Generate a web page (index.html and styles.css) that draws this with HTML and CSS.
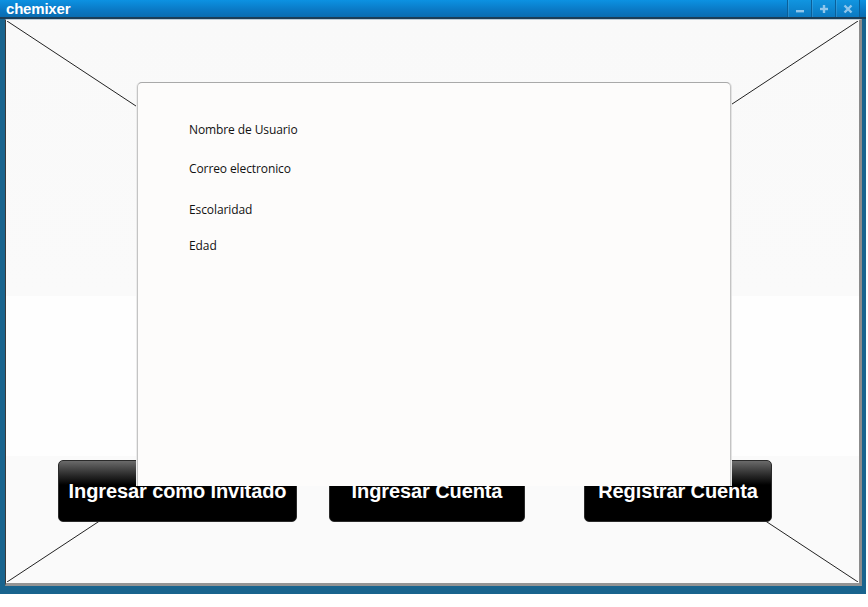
FILE: index.html
```html
<!DOCTYPE html>
<html lang="es">
<head>
<meta charset="utf-8">
<title>chemixer</title>
<link rel="stylesheet" href="styles.css">
</head>
<body>
<div class="window">
  <div class="titlebar">
    <span class="title">chemixer</span>
    <div class="controls">
      <span class="ctl"><svg width="10" height="10" viewBox="0 0 10 10"><rect x="1" y="6" width="8" height="2.4" fill="#8fc6ec"/></svg></span>
      <span class="ctl"><svg width="10" height="10" viewBox="0 0 10 10"><rect x="1" y="3.8" width="8" height="2.4" fill="#8fc6ec"/><rect x="3.8" y="1" width="2.4" height="8" fill="#8fc6ec"/></svg></span>
      <span class="ctl"><svg width="10" height="10" viewBox="0 0 10 10"><path d="M1.5 1.5 L8.5 8.5 M8.5 1.5 L1.5 8.5" stroke="#8fc6ec" stroke-width="2.4"/></svg></span>
    </div>
  </div>
  <div class="frame">
    <div class="canvas">
      <svg class="placeholder" width="100%" height="100%">
        <line x1="0" y1="0" x2="100%" y2="100%" stroke="#222" stroke-width="1"/>
        <line x1="100%" y1="0" x2="0" y2="100%" stroke="#222" stroke-width="1"/>
      </svg>
      <div class="actions">
        <button class="btn btn-guest">Ingresar como Invitado</button>
        <button class="btn btn-login">Ingresar Cuenta</button>
        <button class="btn btn-register">Registrar Cuenta</button>
      </div>
      <div class="panel">
        <div class="field f1">Nombre de Usuario</div>
        <div class="field f2">Correo electronico</div>
        <div class="field f3">Escolaridad</div>
        <div class="field f4">Edad</div>
      </div>
    </div>
  </div>
</div>
</body>
</html>
```

FILE: styles.css
```css
* { box-sizing: border-box; }
html, body { margin: 0; padding: 0; background: #ffffff; }
body { width: 868px; height: 607px; overflow: hidden; }

.window {
  width: 866px;
  height: 594px;
  background: #19648e;
  display: flex;
  flex-direction: column;
}

.titlebar {
  height: 19px;
  flex: none;
  border-bottom: 2px solid #1b3d57;
  background: linear-gradient(#0c92e2, #0a78c4 60%, #0a6cb0);
  display: flex;
  align-items: flex-start;
}
.title {
  font-family: "Liberation Sans", Arial, sans-serif;
  font-weight: bold;
  font-size: 15px;
  color: #ffffff;
  line-height: 17px;
  padding-left: 6px;
  letter-spacing: -0.2px;
}
.controls {
  margin-left: auto;
  margin-right: 6px;
  display: flex;
  height: 17px;
  border-left: 1px solid #0a5f99;
}
.ctl {
  width: 24px;
  height: 17px;
  display: flex;
  align-items: center;
  justify-content: center;
  border-right: 1px solid #0a5f99;
  box-shadow: inset 1px 0 0 rgba(255,255,255,0.12);
  background: linear-gradient(#1195e0, #0b79c2);
}

.frame {
  flex: 1;
  padding: 0 4px 8px 5px;
  display: flex;
}
.canvas {
  flex: 1;
  border-top: 1px solid #bccbd6;
  border-left: 1px solid #3a3a3a;
  border-right: 3px solid #8c8c8c;
  border-bottom: 3px solid #949494;
  background: linear-gradient(#f9f9f9 0, #fafafa 276px, #fefefe 276px, #fefefe 436px, #fafafa 436px);
  display: grid;
  grid-template: 1fr / 1fr;
  overflow: hidden;
}
.canvas > * { grid-area: 1 / 1; }

.placeholder {
  display: block;
  padding: 1px;
}

.actions {
  align-self: start;
  display: flex;
  margin-top: 440px;
  padding-left: 52px;
}
.btn {
  height: 62px;
  border: 1px solid #2a2a2a;
  border-radius: 5px;
  background: linear-gradient(#6a6a6a 0, #2a2a2a 14px, #000 24px, #000 100%);
  color: #ffffff;
  font-family: "Liberation Sans", Arial, sans-serif;
  font-weight: bold;
  font-size: 20px;
  padding: 0;
  text-shadow: 0 0 2px #000, 0 0 1px #000;
  letter-spacing: -0.1px;
}
.btn-guest { width: 239px; }
.btn-login { width: 196px; margin-left: 32px; }
.btn-register { width: 188px; margin-left: 59px; }

.panel {
  align-self: start;
  justify-self: start;
  margin-left: 131px;
  margin-top: 62px;
  width: 594px;
  height: 404px;
  background: #fdfcfb;
  border: 1px solid #c4c4c4;
  border-top-color: #a9a9a9;
  border-bottom: none;
  border-radius: 5px 5px 0 0;
  box-shadow: 1px 0 0 #e4e4e4, -1px 0 0 #ececec;
  padding: 39px 0 0 51px;
  display: flex;
  flex-direction: column;
}
.field {
  font-family: "Open Sans", "DejaVu Sans", sans-serif;
  font-size: 12px;
  line-height: 16px;
  color: #111;
  letter-spacing: -0.1px;
}
.f2 { margin-top: 23px; }
.f3 { margin-top: 25px; }
.f4 { margin-top: 20px; }
```
